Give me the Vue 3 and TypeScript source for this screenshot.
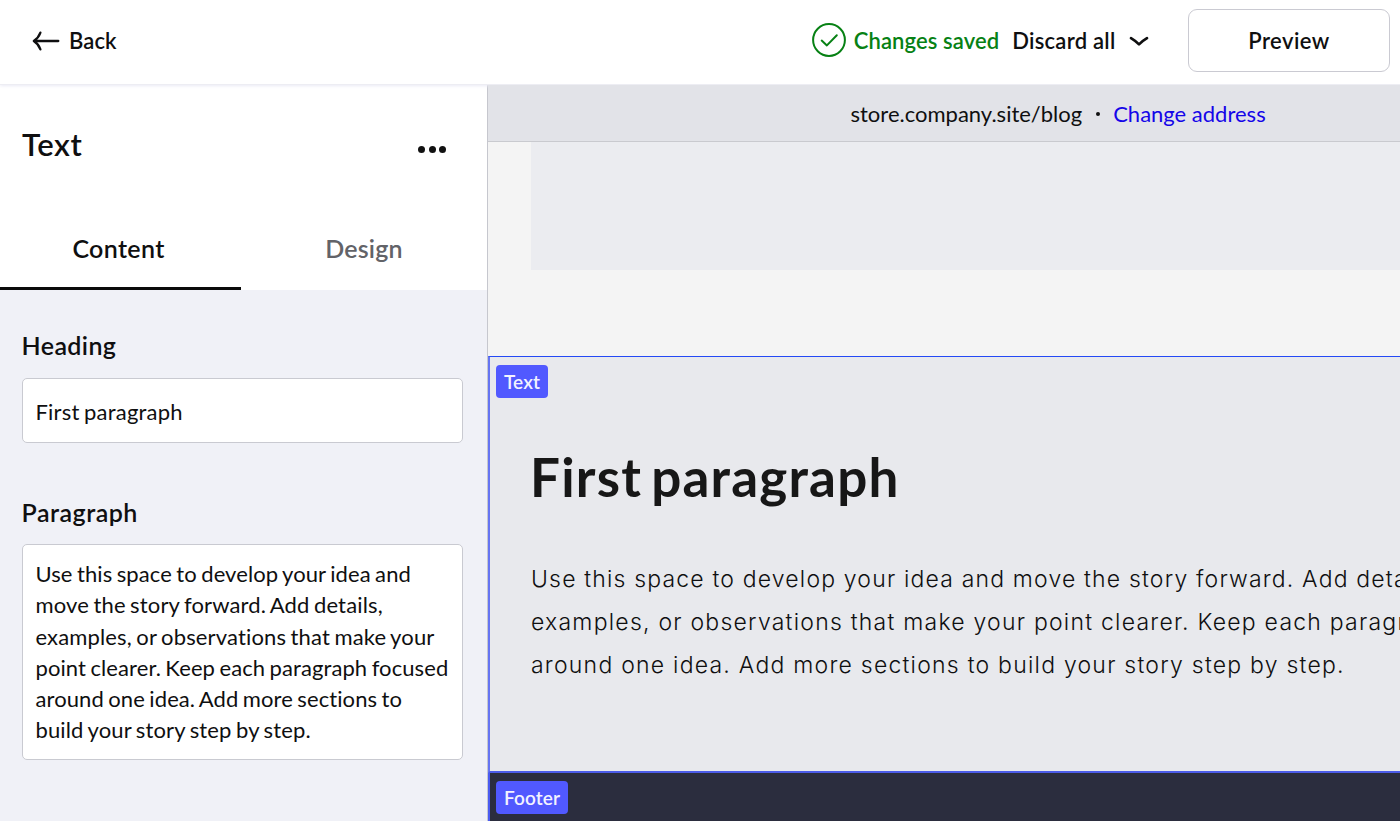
<script setup lang="ts">
interface Line { text: string; tight?: boolean }

const heading = 'First paragraph'
const fieldLines: Line[] = [
  { text: 'Use this space to develop your idea and', tight: true },
  { text: 'move the story forward. Add details,' },
  { text: 'examples, or observations that make your' },
  { text: 'point clearer. Keep each paragraph focused', tight: true },
  { text: 'around one idea. Add more sections to', tight: true },
  { text: 'build your story step by step.' },
]
const canvasLines: Line[] = [
  { text: 'Use this space to develop your idea and move the story forward. Add details,', tight: true },
  { text: 'examples, or observations that make your point clearer. Keep each paragraph focused' },
  { text: 'around one idea. Add more sections to build your story step by step.' },
]
</script>

<template>
  <div class="app">
    <header class="topbar">
      <button class="back">
        <svg width="28" height="20" viewBox="0 0 28 20"><path d="M8.4 1.7C7.2 5 5 8 1.8 10C5 12 7.2 15 8.4 18.3M2 10H26.3" /></svg>
        <span>Back</span>
      </button>
      <div class="status">
        <svg width="34" height="34" viewBox="0 0 34 34"><circle cx="17" cy="17" r="15.9" /><path d="M9.7 17.6L14.9 22.4L24.8 12.3" /></svg>
        <span>Changes saved</span>
      </div>
      <button class="discard">
        <span>Discard all</span>
        <svg width="20" height="11" viewBox="0 0 20 11"><path d="M2 2.2C5 4 8 6.4 10 8.4C12 6.4 15 4 18 2.2" /></svg>
      </button>
      <button class="preview">Preview</button>
    </header>
    <div class="body">
      <aside class="sidebar">
        <div class="panel-head">
          <div class="title-row">
            <h2>Text</h2>
            <button class="more" aria-label="More"><i></i><i></i><i></i></button>
          </div>
          <nav class="tabs">
            <button class="tab active">Content</button>
            <button class="tab">Design</button>
          </nav>
        </div>
        <div class="form">
          <label class="label">Heading</label>
          <div class="input">{{ heading }}</div>
          <label class="label second">Paragraph</label>
          <div class="textarea">
            <div v-for="l in fieldLines" :key="l.text" :class="{ tight: l.tight }">{{ l.text }}</div>
          </div>
        </div>
      </aside>
      <main class="canvas">
        <div class="address">
          <span>store.company.site/blog</span><i class="sep"></i><a>Change address</a>
        </div>
        <section class="above"><div class="block"></div></section>
        <section class="selected">
          <span class="tag">Text</span>
          <h1>{{ heading }}</h1>
          <div class="copy">
            <div v-for="l in canvasLines" :key="l.text" :class="{ tight: l.tight }">{{ l.text }}</div>
          </div>
        </section>
        <section class="footer"><span class="tag">Footer</span></section>
      </main>
    </div>
  </div>
</template>

<style>
body { margin: 0; overflow: hidden; }
</style>

<style scoped>
* { box-sizing: border-box; }
.app { width: 1400px; height: 821px; overflow: hidden; display: flex; flex-direction: column; background: #fff; color: #0f0f10; font-family: Lato, "Liberation Sans", sans-serif; font-size: 22px; }
button { border: 0; padding: 0; margin: 0; background: none; font: inherit; letter-spacing: inherit; color: inherit; display: flex; align-items: center; }
svg { display: block; flex: none; fill: none; stroke: currentColor; stroke-linecap: round; stroke-linejoin: round; stroke-width: 2.3; }
.topbar { height: 85px; flex: none; display: flex; align-items: center; padding: 0 10px 4px 32px; border-bottom: 1px solid #ededf3; font-weight: 600; letter-spacing: 0.1px; position: relative; box-shadow: 0 1px 3px #ebebf5; }
.back { gap: 9px; margin-right: auto; }
.back svg { margin-top: 1px; }
.back span, .status span, .discard span { padding-top: 1px; }
.status { display: flex; align-items: center; gap: 8px; color: #078114; margin-right: 13px; }
.status svg { stroke-width: 2; }
.discard { gap: 14px; margin-right: 38.5px; letter-spacing: 0.25px; }
.discard svg { stroke-width: 2.7; margin: 3px 1px 0 -1px; }
.preview { width: 202px; height: 63px; border: 1.5px solid #cacad2; border-radius: 9px; justify-content: center; letter-spacing: 0.45px; padding-top: 1px; }
.body { flex: 1; min-height: 0; display: flex; }
.sidebar { width: 488px; flex: none; border-right: 1px solid #c6c7ce; background: #f0f1f7; }
.panel-head { height: 205px; background: #fff; display: flex; flex-direction: column; justify-content: space-between; }
.title-row { display: flex; justify-content: space-between; align-items: center; padding: 39px 41px 0 22px; }
h2 { margin: 0; font-size: 31px; line-height: 40px; font-weight: 600; letter-spacing: 0.55px; }
.more { gap: 3.5px; padding-top: 10px; }
.more i { width: 7px; height: 7px; border-radius: 50%; background: #111; }
.tabs { display: flex; height: 82px; font-size: 25px; font-weight: 600; letter-spacing: 0.35px; }
.tab { width: 241px; justify-content: center; padding-right: 4px; color: #626368; border-bottom: 3px solid transparent; }
.tab:last-child { padding: 0 0 0 5px; letter-spacing: 0.2px; }
.tab.active { color: #0f0f10; border-color: #0a0a0a; }
.form { padding: 35px 24px 0 21.5px; }
.label { display: block; font-size: 25px; line-height: 40px; font-weight: 600; letter-spacing: 0.4px; }
.label.second { margin-top: 49px; letter-spacing: 0.5px; }
.input, .textarea { border: 1px solid #c9cad1; border-radius: 5px; background: #fff; padding: 0 13px; letter-spacing: 0.14px; word-spacing: -1.3px; }
.input { margin-top: 13px; height: 65px; display: flex; align-items: center; padding-top: 1px; letter-spacing: 0.2px; }
.textarea { margin-top: 12px; height: 215.5px; padding-top: 13px; line-height: 31.3px; white-space: nowrap; }
.textarea .tight { letter-spacing: 0.09px; }
.canvas { flex: 1; min-width: 0; display: flex; flex-direction: column; background: #f4f4f4; position: relative; z-index: 1; }
.address { height: 57px; flex: none; display: flex; align-items: center; background: #e2e3e8; border-bottom: 1px solid #c9cacf; padding-left: 362.5px; }
.sep { width: 4px; height: 4px; border-radius: 50%; background: #111; margin: 2px 13.5px 0; }
.address a { color: #1505e8; }
.above { height: 214px; flex: none; padding-left: 43px; }
.block { height: 128px; background: #ebecf0; }
.selected { height: 417px; flex: none; background: #e8e9ed; border: 2px solid #4c5ce8; border-top: 1px solid #2449f5; border-left-color: #6675f2; border-right: 0; padding: 8px 0 0 6px; overflow: hidden; }
.tag { display: inline-flex; align-items: center; height: 33px; padding: 0 8px; border-radius: 4px; background: #5159ff; color: #f3f3ff; font-size: 19px; font-weight: 600; letter-spacing: 0.1px; vertical-align: top; }
h1 { margin: 46px 0 0 34px; font-size: 53px; line-height: 66px; font-weight: 700; letter-spacing: 1.2px; word-spacing: -5px; color: #171717; }
.copy { margin: 47.5px 0 0 35px; font-family: Inter, sans-serif; font-size: 23px; font-weight: 350; line-height: 43px; letter-spacing: 1.23px; white-space: nowrap; }
.copy .tight { letter-spacing: 1.17px; }
.footer { flex: 1; background: #2b2d3e; border-left: 2px solid #4b5bf0; padding: 8px 0 0 6px; }
</style>
